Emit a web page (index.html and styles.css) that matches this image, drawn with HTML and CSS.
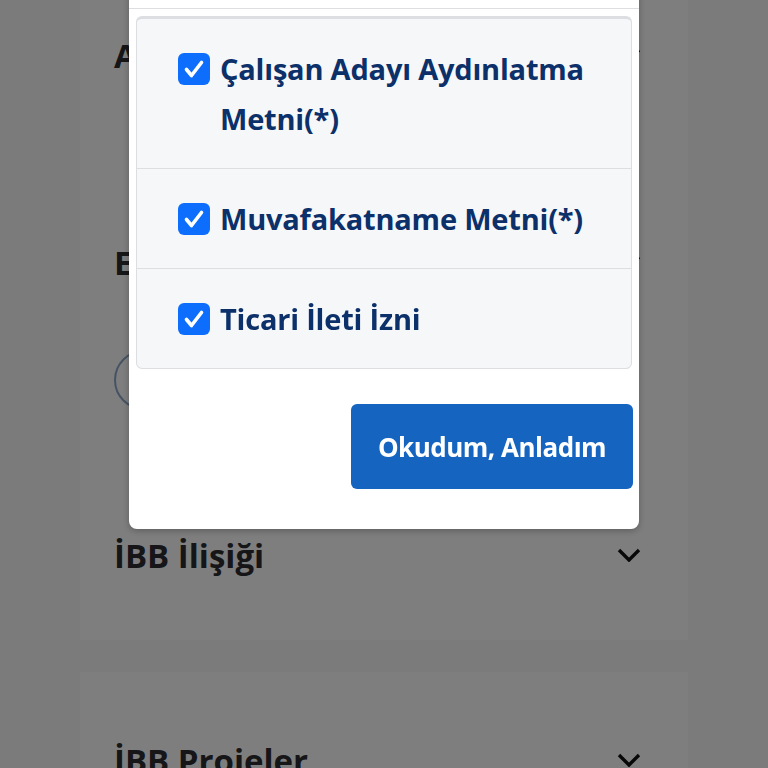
FILE: index.html
```html
<!DOCTYPE html>
<html lang="tr">
<head>
<meta charset="utf-8">
<title>Aydınlatma Metinleri</title>
<link rel="stylesheet" href="styles.css">
</head>
<body>
<div class="page">
  <section class="card card-main">
    <div class="row row-a">
      <h2 class="row-title">Adres Bilgileri</h2>
      <svg class="chev" viewBox="0 0 24 14" width="24" height="14"><polyline points="2,2 12,12 22,2" fill="none" stroke="#111" stroke-width="3.4"/></svg>
    </div>
    <div class="row row-e">
      <h2 class="row-title">Eğitim Bilgileri</h2>
      <svg class="chev" viewBox="0 0 24 14" width="24" height="14"><polyline points="2,2 12,12 22,2" fill="none" stroke="#111" stroke-width="3.4"/></svg>
    </div>
    <div class="pill-input"></div>
    <div class="row row-ibb">
      <h2 class="row-title">İBB İlişiği</h2>
      <svg class="chev" viewBox="0 0 24 14" width="24" height="14"><polyline points="2,2 12,12 22,2" fill="none" stroke="#111" stroke-width="3.4"/></svg>
    </div>
  </section>
  <section class="card card-second">
    <div class="row row-proj">
      <h2 class="row-title">İBB Projeler</h2>
      <svg class="chev" viewBox="0 0 24 14" width="24" height="14"><polyline points="2,2 12,12 22,2" fill="none" stroke="#111" stroke-width="3.4"/></svg>
    </div>
  </section>
</div>

<div class="overlay"></div>

<div class="modal">
  <div class="modal-header"></div>
  <div class="modal-body">
    <ul class="check-list">
      <li class="check-item">
        <span class="checkbox"><svg viewBox="0 0 32 32" width="32" height="32"><polyline points="8.5,16.5 13.5,22.5 23.5,9.5" fill="none" stroke="#fff" stroke-width="3.6" stroke-linecap="round" stroke-linejoin="round"/></svg></span>
        <span class="check-label">Çalışan Adayı Aydınlatma Metni(*)</span>
      </li>
      <li class="check-item">
        <span class="checkbox"><svg viewBox="0 0 32 32" width="32" height="32"><polyline points="8.5,16.5 13.5,22.5 23.5,9.5" fill="none" stroke="#fff" stroke-width="3.6" stroke-linecap="round" stroke-linejoin="round"/></svg></span>
        <span class="check-label">Muvafakatname Metni(*)</span>
      </li>
      <li class="check-item">
        <span class="checkbox"><svg viewBox="0 0 32 32" width="32" height="32"><polyline points="8.5,16.5 13.5,22.5 23.5,9.5" fill="none" stroke="#fff" stroke-width="3.6" stroke-linecap="round" stroke-linejoin="round"/></svg></span>
        <span class="check-label">Ticari İleti İzni</span>
      </li>
    </ul>
  </div>
  <div class="modal-footer">
    <button class="btn-primary" type="button">Okudum, Anladım</button>
  </div>
</div>
</body>
</html>
```

FILE: styles.css
```css
* { box-sizing: border-box; }
html, body { margin: 0; padding: 0; }
body {
  background: #f6f6f7;
  font-family: "Open Sans", Lato, "Noto Sans", sans-serif;
  height: 768px;
  overflow: hidden;
}

.page {
  padding: 0 80px;
}
.card {
  background: #fcfcfc;
  padding: 0 47px 0 34px;
}
.card-main {
  height: 640px;
  padding-top: 30px;
}
.card-second {
  margin-top: 32px;
  padding-top: 63px;
  height: 200px;
}
.row {
  display: flex;
  align-items: center;
  justify-content: space-between;
  height: 50px;
}
.row-e { margin-top: 157px; }
.row-ibb { margin-top: 120px; }
.row-title {
  margin: 0;
  font-size: 33px;
  font-weight: 700;
  color: #2c2d30;
  letter-spacing: 0;
}
.chev { display: block; }
.pill-input {
  margin-top: 63px;
  height: 60px;
  width: 200px;
  border: 2px solid #8aa7c8;
  border-radius: 30px;
}

.overlay {
  position: fixed;
  inset: 0;
  background: rgba(0, 0, 0, 0.5);
}

.modal {
  position: fixed;
  left: 129px;
  width: 510px;
  bottom: 239px;
  background: #fff;
  border-radius: 8px;
  box-shadow: 0 2px 6px rgba(0, 0, 0, 0.25);
}
.modal-header {
  height: 80px;
  border-bottom: 1px solid #dcdee2;
}
.modal-body {
  padding: 7px 7px 0 7px;
}
.check-list {
  list-style: none;
  margin: 0;
  padding: 0;
  border: 1px solid #dcdee2;
  border-top-width: 3px;
  border-radius: 6px;
  background: #f6f7f9;
}
.check-item {
  display: flex;
  align-items: flex-start;
  gap: 10px;
  padding: 25px 8px 24px 41px;
}
.check-item + .check-item {
  border-top: 1px solid #dcdee2;
}
.checkbox {
  flex: 0 0 32px;
  width: 32px;
  height: 32px;
  margin-top: 9px;
  background: #0d6efd;
  border-radius: 6px;
}
.checkbox svg { display: block; }
.check-label {
  font-size: 29px;
  line-height: 50px;
  font-weight: 700;
  color: #0c3069;
  letter-spacing: -0.2px;
}

.modal-footer {
  display: flex;
  justify-content: flex-end;
  padding: 35px 6px 40px;
}
.btn-primary {
  height: 85px;
  width: 282px;
  border: none;
  border-radius: 6px;
  background: #1565c0;
  color: #fff;
  font-family: "Open Sans", Lato, "Noto Sans", sans-serif;
  font-size: 26px;
  font-weight: 700;
  letter-spacing: -0.5px;
}
```
